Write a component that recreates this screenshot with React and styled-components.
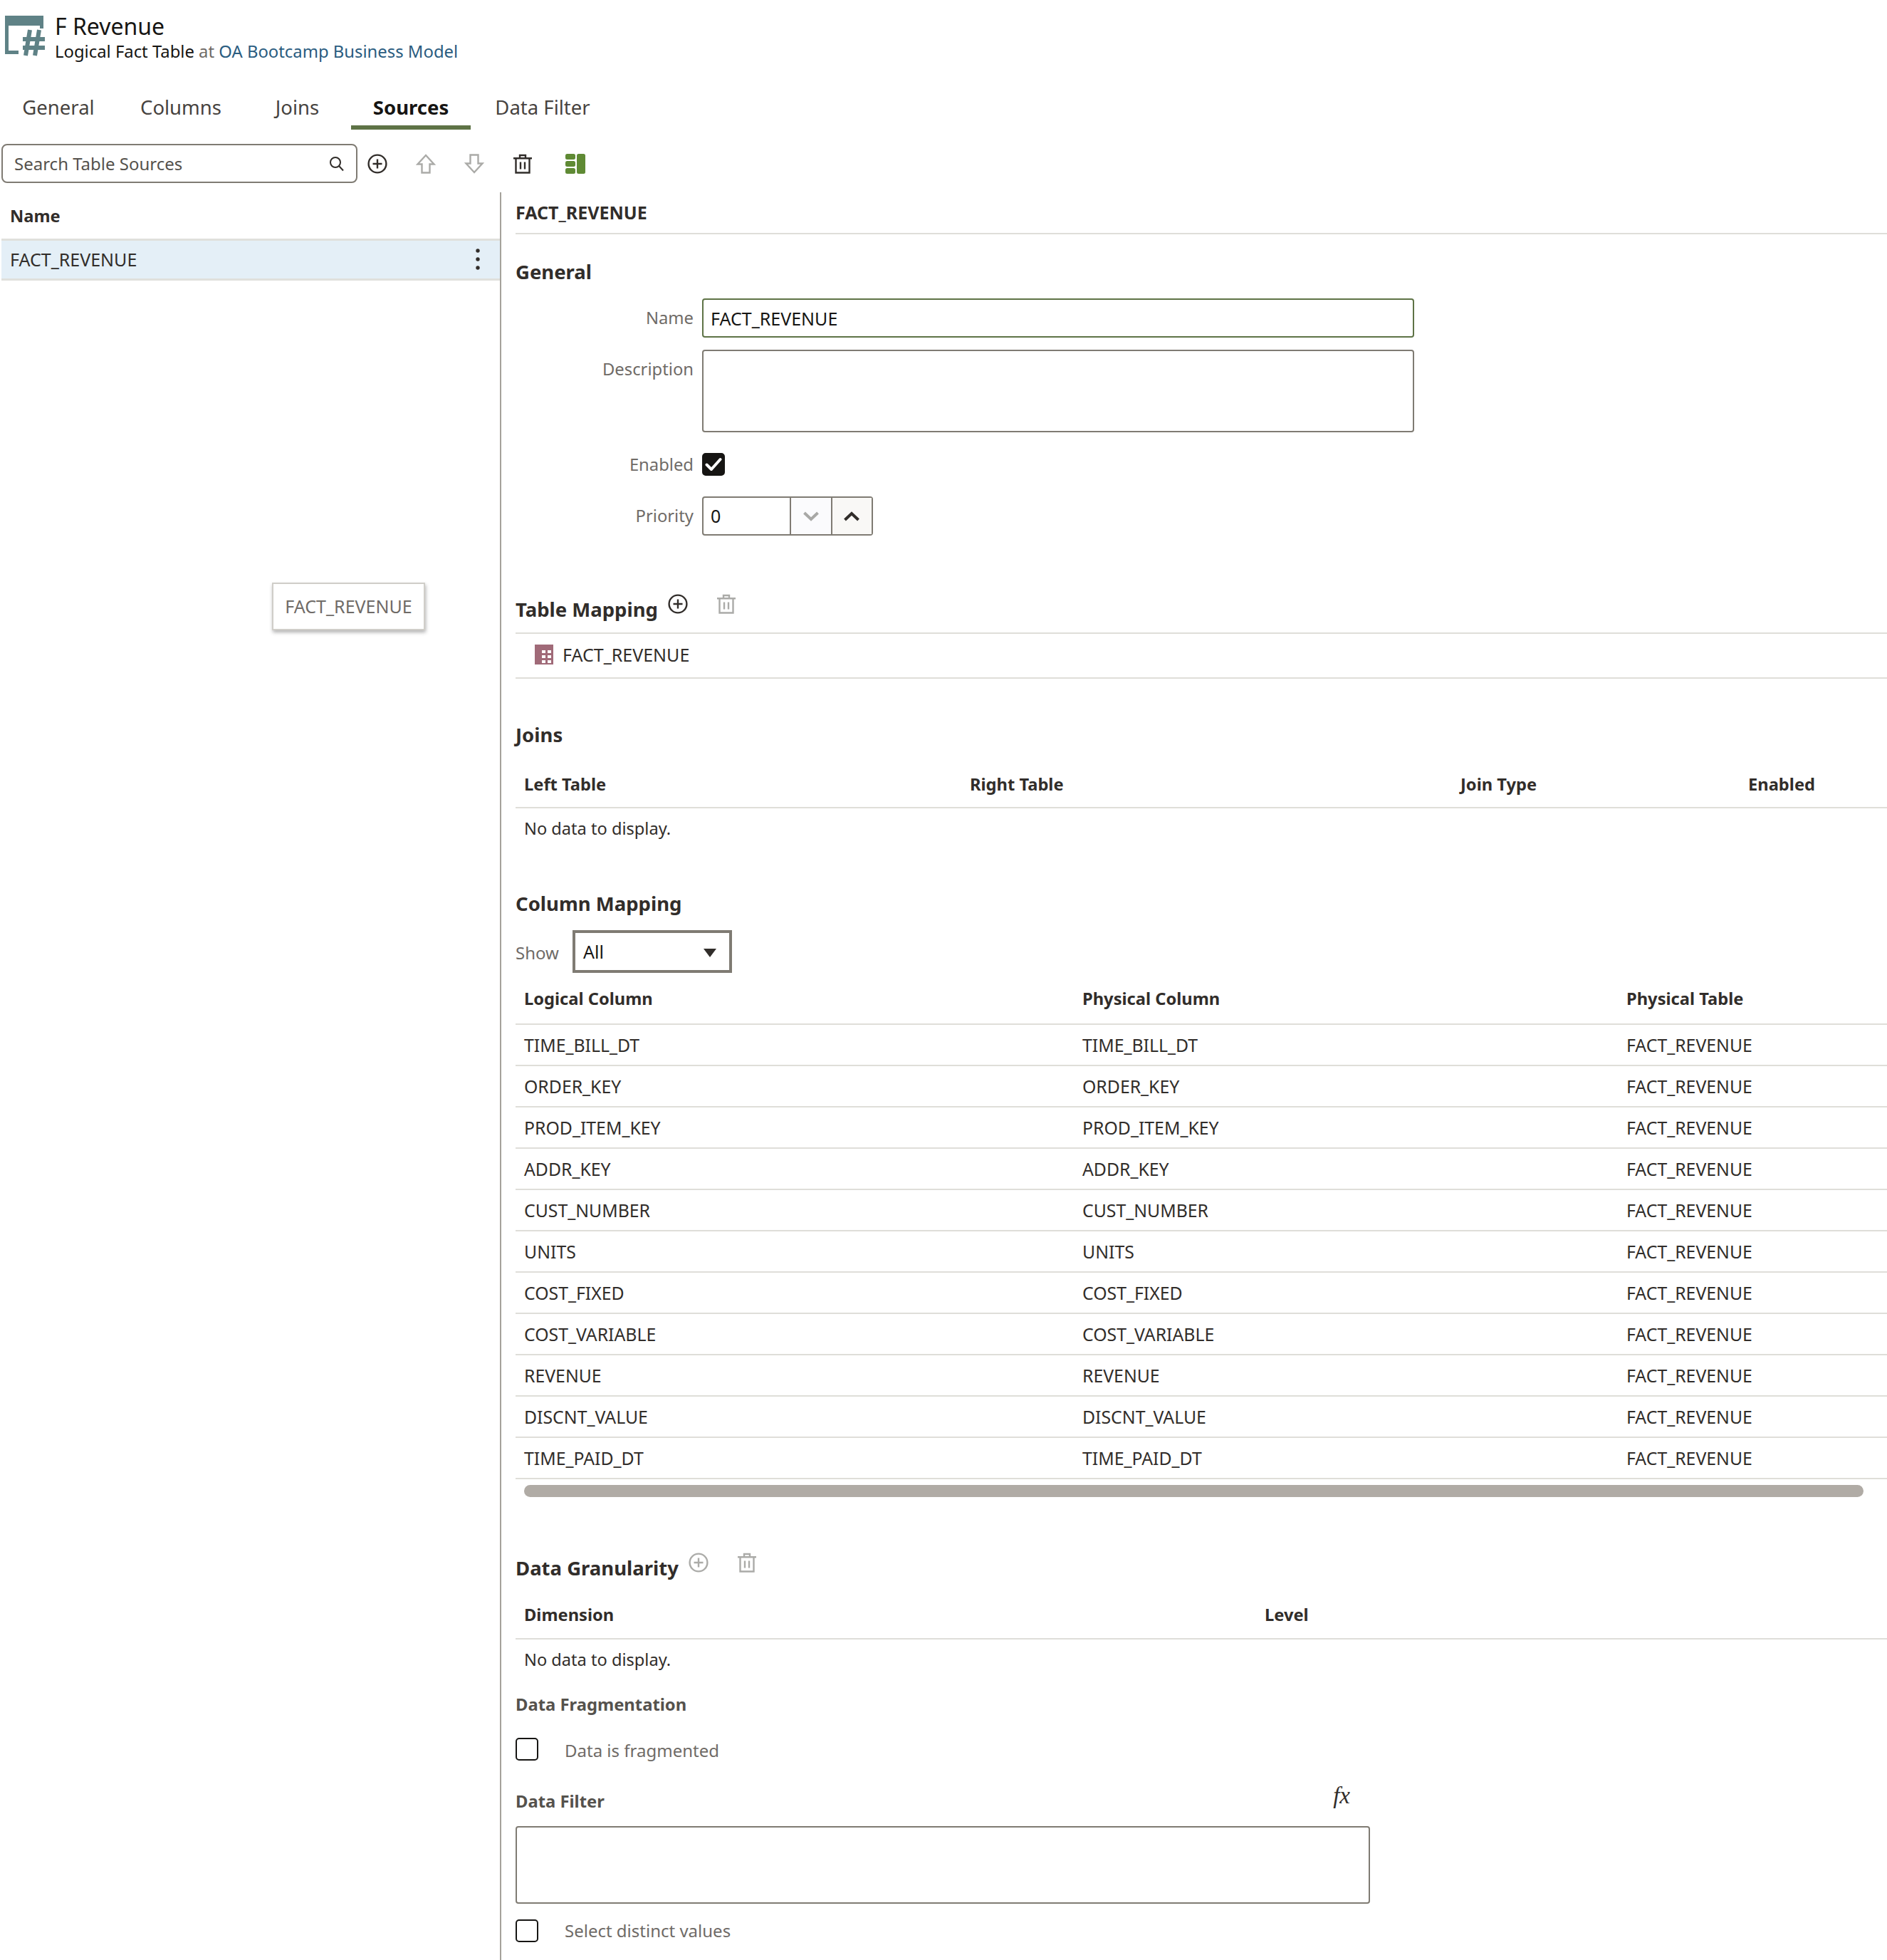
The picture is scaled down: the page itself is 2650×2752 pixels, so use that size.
import React from "react";
import styled, { createGlobalStyle } from "styled-components";

const GlobalStyle = createGlobalStyle`
  html, body {
    margin: 0;
    padding: 0;
    background: #fff;
    font-family: "Noto Sans", "Open Sans", sans-serif;
    color: #161513;
  }
  * { box-sizing: border-box; }
`;

const Page = styled.div`
  width: 2650px;
  height: 2752px;
  overflow: hidden;
  background: #fff;
`;

const Header = styled.header`
  display: flex;
  height: 91px;
  padding: 19px 0 0 7px;
`;

const HeaderIcon = styled.svg`
  width: 57px;
  height: 60px;
  margin: 3px 13px 0 0;
  flex: none;
`;

const Title = styled.div`
  font-size: 32px;
  line-height: 36px;
`;

const Subtitle = styled.div`
  font-size: 23.85px;
  line-height: 34px;
  color: #6f6b67;
`;

const Strong = styled.span`
  color: #161513;
`;

const ModelLink = styled.span`
  color: #2a5c80;
`;

const TabBar = styled.nav`
  display: flex;
  height: 60px;
  margin-top: 31px;
  padding-left: 2px;
`;

const Tab = styled.div`
  width: ${p => p.$w}px;
  margin-left: ${p => p.$gap || 0}px;
  text-align: center;
  font-size: 27.5px;
  line-height: 58px;
  color: ${p => (p.$active ? "#161513" : "#47433f")};
  font-weight: ${p => (p.$active ? 700 : 400)};
  box-shadow: ${p => (p.$active ? "inset 0 -6px 0 #5e7346" : "none")};
`;

const Toolbar = styled.div`
  display: flex;
  align-items: center;
  height: 55px;
  margin-top: 20px;
  padding-left: 2px;
`;

const SearchBox = styled.div`
  display: flex;
  align-items: center;
  justify-content: space-between;
  width: 500px;
  height: 55px;
  padding: 0 16px;
  border: 2px solid #7f7b73;
  border-radius: 8px;
`;

const SearchInput = styled.input`
  flex: 1;
  min-width: 0;
  border: 0;
  outline: 0;
  padding: 0;
  font: 400 24px "Noto Sans", sans-serif;
  color: #47433f;
  &::placeholder { color: #55524d; opacity: 1; }
`;

const IconBox = styled.div`
  display: flex;
  align-items: center;
  justify-content: center;
  flex: none;
  width: 40px;
  height: 28px;
  margin-left: ${p => p.$gap}px;
  color: ${p => p.$color || "#312d2a"};
`;

const Main = styled.main`
  display: flex;
  margin-top: 13px;
  height: 2482px;
`;

const LeftPane = styled.aside`
  position: relative;
  flex: none;
  width: 704px;
  border-right: 2px solid #a5a29b;
`;

const ListHead = styled.div`
  height: 65px;
  padding-left: 14px;
  font-size: 23.7px;
  font-weight: 700;
  line-height: 66px;
  color: #312d2a;
`;

const ListRow = styled.div`
  display: flex;
  align-items: center;
  justify-content: space-between;
  height: 59px;
  margin-left: 2px;
  padding: 0 27px 2px 12px;
  background: #e4eff7;
  border-top: 3px solid #e0e0dc;
  border-bottom: 3px solid #e0e0dc;
  font-size: 25px;
  color: #312d2a;
`;

const Kebab = styled.svg`
  width: 8px;
  height: 32px;
`;

const DragTip = styled.div`
  position: absolute;
  top: 548px;
  left: 382px;
  width: 215px;
  height: 67px;
  border: 2px solid #d0cec9;
  background: #fff;
  box-shadow: 1px 3px 5px rgba(0, 0, 0, 0.3);
  font-size: 25px;
  line-height: 63px;
  text-align: center;
  color: #6f6b67;
`;

const RightPane = styled.section`
  flex: 1;
  min-width: 0;
  padding-left: 20px;
`;

const PaneTitle = styled.div`
  height: 59px;
  padding-top: 14px;
  border-bottom: 2px solid #dfded9;
  font-size: 25px;
  font-weight: 700;
  line-height: 28px;
  color: #312d2a;
`;

const Heading = styled.h2`
  margin: ${p => p.$top}px 0 0;
  font-size: 27.5px;
  font-weight: 700;
  line-height: 40px;
  color: #312d2a;
`;

const HeadRow = styled.div`
  display: flex;
  align-items: flex-start;
  margin-top: ${p => p.$top}px;
  ${IconBox} { margin-top: -2px; }
`;

const FormRow = styled.div`
  display: flex;
  margin-top: ${p => p.$top}px;
`;

const FormLabel = styled.label`
  flex: none;
  width: 250px;
  margin-right: 12px;
  text-align: right;
  font-size: 23.8px;
  line-height: ${p => p.$lh}px;
  color: #6f6b67;
`;

const TextField = styled.input`
  width: 1000px;
  height: 55px;
  padding: 0 10px;
  border: 2px solid ${p => p.$accent || "#7f7b73"};
  border-radius: 4px;
  outline: 0;
  font: 400 25px "Noto Sans", sans-serif;
  color: #161513;
`;

const TextArea = styled.textarea`
  display: block;
  width: ${p => p.$w}px;
  height: ${p => p.$h}px;
  margin-top: ${p => p.$top || 0}px;
  border: 2px solid #7f7b73;
  border-radius: 4px;
  outline: 0;
  resize: none;
`;

const CheckBox = styled.div`
  display: flex;
  align-items: center;
  justify-content: center;
  flex: none;
  width: 32px;
  height: 32px;
  border-radius: 5px;
  border: 2.5px solid #161513;
  background: ${p => (p.$checked ? "#161513" : "#fff")};
`;

const Stepper = styled.div`
  display: flex;
  width: 240px;
  height: 55px;
  border: 2px solid #7f7b73;
  border-radius: 4px;
`;

const StepValue = styled.div`
  width: 121px;
  padding-left: 10px;
  font-size: 25px;
  line-height: 51px;
`;

const StepButton = styled.div`
  display: flex;
  align-items: center;
  justify-content: center;
  flex: 1;
  border-left: 2px solid #7f7b73;
  background: ${p => p.$bg};
  color: ${p => p.$color};
`;

const MappingRow = styled.div`
  display: flex;
  align-items: center;
  height: 65px;
  margin-top: 12px;
  padding: 0 0 4px 27px;
  border-top: 2px solid #dfded9;
  border-bottom: 2px solid #dfded9;
  font-size: 25px;
  color: #312d2a;
`;

const TableGlyph = styled.svg`
  width: 26px;
  height: 28px;
  margin-right: 13px;
`;

const GridRow = styled.div`
  display: grid;
  grid-template-columns: ${p => p.$cols};
  align-items: center;
  height: ${p => p.$h}px;
  margin-top: ${p => p.$top || 0}px;
  padding-left: 12px;
  border-bottom: 2px solid #dfded9;
`;

const HeadCell = styled.div`
  font-size: 23.7px;
  font-weight: 700;
  color: #312d2a;
`;

const BodyRow = styled(GridRow)`
  font-size: 24.8px;
  color: #312d2a;
`;

const EmptyRow = styled.div`
  padding-left: 12px;
  font-size: 23.6px;
  line-height: 56px;
  color: #312d2a;
`;

const ShowRow = styled.div`
  display: flex;
  align-items: center;
  margin-top: 17px;
`;

const ShowLabel = styled.span`
  width: 80px;
  padding-top: 2px;
  font-size: 24px;
  color: #6f6b67;
`;

const SelectBox = styled.div`
  display: flex;
  align-items: center;
  justify-content: space-between;
  width: 224px;
  height: 60px;
  padding: 0 18px 0 11px;
  border: 4px solid #7f7b73;
  font-size: 25px;
`;

const Caret = styled.svg`
  width: 18px;
  height: 12px;
  margin-top: 4px;
`;

const ScrollThumb = styled.div`
  width: 1881px;
  height: 17px;
  margin: 8px 0 0 12px;
  border-radius: 9px;
  background: #b0aba5;
`;

const SubHeading = styled.div`
  margin-top: ${p => p.$top}px;
  font-size: 23.8px;
  font-weight: 700;
  line-height: 30px;
  color: #55524d;
`;

const CheckRow = styled.div`
  display: flex;
  align-items: center;
  margin-top: ${p => p.$top}px;
`;

const CheckLabel = styled.span`
  margin-left: 37px;
  padding-top: ${p => p.$pad}px;
  font-size: 24px;
  color: #6f6b67;
`;

const FilterHead = styled.div`
  display: flex;
  justify-content: space-between;
  width: 1172px;
  margin-top: 40px;
`;

const FxMark = styled.span`
  margin-top: -8px;
  font: italic 400 33px "Liberation Serif", serif;
  line-height: 30px;
  color: #312d2a;
`;

const PlusIcon = () => (
  <svg width="28" height="28" viewBox="0 0 28 28" fill="none" stroke="currentColor" strokeWidth="2.4">
    <circle cx="14" cy="14" r="12.4" />
    <path d="M14 7.5v13M7.5 14h13" />
  </svg>
);

const TrashIcon = () => (
  <svg width="28" height="28" viewBox="0 0 28 28" fill="none" stroke="currentColor" strokeWidth="2.4">
    <path d="M1 6.2h26M10 6V2h8v4M4.5 6.2V26.5h19V6.2M11 11.5v10M17 11.5v10" />
  </svg>
);

const UpArrow = () => (
  <svg width="28" height="28" viewBox="0 0 28 28" fill="none" stroke="currentColor" strokeWidth="2.4">
    <path d="M14 2L2.5 14.5H8.5V26.5H19.5V14.5H25.5Z" />
  </svg>
);

const DownArrow = () => (
  <svg width="28" height="28" viewBox="0 0 28 28" fill="none" stroke="currentColor" strokeWidth="2.4">
    <path d="M14 26L2.5 13.5H8.5V1.5H19.5V13.5H25.5Z" />
  </svg>
);

const SplitIcon = () => (
  <svg width="28" height="28" viewBox="0 0 28 28" fill="#5f8a34">
    <rect x="0" y="0" width="14" height="8" rx="2.5" />
    <rect x="0" y="10" width="14" height="8" rx="2.5" />
    <rect x="0" y="20" width="14" height="8" rx="2.5" />
    <rect x="16" y="0" width="12" height="28" rx="2.5" />
  </svg>
);

const Chevron = ({ up }) => (
  <svg width="22" height="14" viewBox="0 0 22 14" fill="none" stroke="currentColor" strokeWidth="4">
    <path d={up ? "M1.5 12L11 3l9.5 9" : "M1.5 2L11 11l9.5-9"} />
  </svg>
);

const CheckMark = () => (
  <svg width="24" height="20" viewBox="0 0 24 20" fill="none" stroke="#fff" strokeWidth="4" strokeLinecap="round" strokeLinejoin="round">
    <path d="M2.5 10.5L9 17 21.5 3" />
  </svg>
);

const rows = [
  "TIME_BILL_DT",
  "ORDER_KEY",
  "PROD_ITEM_KEY",
  "ADDR_KEY",
  "CUST_NUMBER",
  "UNITS",
  "COST_FIXED",
  "COST_VARIABLE",
  "REVENUE",
  "DISCNT_VALUE",
  "TIME_PAID_DT",
];

const MAP_COLS = "784px 764px 1fr";

export default function App() {
  return (
    <Page>
      <GlobalStyle />
      <Header>
        <HeaderIcon viewBox="0 0 57 60">
          <path fill="#5f8286" d="M0 0h54v18h-5V14H5v35h14v5H0z" />
          <path
            stroke="#5f8286"
            strokeWidth="6"
            fill="none"
            d="M35 20L29 56M48 20L42 56M25 33H56M25 45H56"
          />
        </HeaderIcon>
        <div>
          <Title>F Revenue</Title>
          <Subtitle>
            <Strong>Logical Fact Table</Strong> at <ModelLink>OA Bootcamp Business Model</ModelLink>
          </Subtitle>
        </div>
      </Header>

      <TabBar>
        <Tab $w={160}>General</Tab>
        <Tab $w={184}>Columns</Tab>
        <Tab $w={143}>Joins</Tab>
        <Tab $w={168} $gap={4} $active>Sources</Tab>
        <Tab $w={202}>Data Filter</Tab>
      </TabBar>

      <Toolbar>
        <SearchBox>
          <SearchInput placeholder="Search Table Sources" readOnly />
          <svg width="22" height="22" viewBox="0 0 22 22" fill="none" stroke="#312d2a" strokeWidth="2">
            <circle cx="9" cy="9" r="7" />
            <path d="M14 14l6 6.5" />
          </svg>
        </SearchBox>
        <IconBox $gap={8}><PlusIcon /></IconBox>
        <IconBox $gap={28} $color="#ababa8"><UpArrow /></IconBox>
        <IconBox $gap={28} $color="#ababa8"><DownArrow /></IconBox>
        <IconBox $gap={28}><TrashIcon /></IconBox>
        <IconBox $gap={34}><SplitIcon /></IconBox>
      </Toolbar>

      <Main>
        <LeftPane>
          <ListHead>Name</ListHead>
          <ListRow>
            FACT_REVENUE
            <Kebab viewBox="0 0 8 32" fill="#312d2a">
              <circle cx="4" cy="4" r="2.7" />
              <circle cx="4" cy="16" r="2.7" />
              <circle cx="4" cy="28" r="2.7" />
            </Kebab>
          </ListRow>
          <DragTip>FACT_REVENUE</DragTip>
        </LeftPane>

        <RightPane>
          <PaneTitle>FACT_REVENUE</PaneTitle>
          <Heading $top={33}>General</Heading>

          <FormRow $top={17}>
            <FormLabel $lh={55}>Name</FormLabel>
            <TextField $accent="#5e7346" defaultValue="FACT_REVENUE" readOnly />
          </FormRow>
          <FormRow $top={17}>
            <FormLabel $lh={55}>Description</FormLabel>
            <TextArea $w={1000} $h={116} readOnly />
          </FormRow>
          <FormRow $top={29}>
            <FormLabel $lh={32}>Enabled</FormLabel>
            <CheckBox $checked><CheckMark /></CheckBox>
          </FormRow>
          <FormRow $top={29}>
            <FormLabel $lh={55}>Priority</FormLabel>
            <Stepper>
              <StepValue>0</StepValue>
              <StepButton $bg="#fbfbfd" $color="#a8a8a6"><Chevron /></StepButton>
              <StepButton $bg="#f9f8f6" $color="#312d2a"><Chevron up /></StepButton>
            </Stepper>
          </FormRow>

          <HeadRow $top={84}>
            <Heading $top={0}>Table Mapping</Heading>
            <IconBox $gap={8}><PlusIcon /></IconBox>
            <IconBox $gap={28} $color="#ababa8"><TrashIcon /></IconBox>
          </HeadRow>
          <MappingRow>
            <TableGlyph viewBox="0 0 26 28">
              <rect width="26" height="28" fill="#a06a78" />
              <g fill="#fff">
                <rect x="10" y="8" width="5" height="4" />
                <rect x="18" y="8" width="5" height="4" />
                <rect x="10" y="15" width="5" height="4" />
                <rect x="18" y="15" width="5" height="4" />
                <rect x="10" y="22" width="5" height="4" />
                <rect x="18" y="22" width="5" height="4" />
              </g>
            </TableGlyph>
            FACT_REVENUE
          </MappingRow>

          <Heading $top={59}>Joins</Heading>
          <GridRow $cols="626px 689px 404px 1fr" $h={66} $top={17}>
            <HeadCell>Left Table</HeadCell>
            <HeadCell>Right Table</HeadCell>
            <HeadCell>Join Type</HeadCell>
            <HeadCell>Enabled</HeadCell>
          </GridRow>
          <EmptyRow>No data to display.</EmptyRow>

          <Heading $top={58}>Column Mapping</Heading>
          <ShowRow>
            <ShowLabel>Show</ShowLabel>
            <SelectBox>
              All
              <Caret viewBox="0 0 18 12" fill="#312d2a">
                <path d="M0 0h18L9 12z" />
              </Caret>
            </SelectBox>
          </ShowRow>
          <GridRow $cols={MAP_COLS} $h={73}>
            <HeadCell>Logical Column</HeadCell>
            <HeadCell>Physical Column</HeadCell>
            <HeadCell>Physical Table</HeadCell>
          </GridRow>
          {rows.map(name => (
            <BodyRow key={name} $cols={MAP_COLS} $h={58}>
              <div>{name}</div>
              <div>{name}</div>
              <div>FACT_REVENUE</div>
            </BodyRow>
          ))}
          <ScrollThumb />

          <HeadRow $top={80}>
            <Heading $top={0}>Data Granularity</Heading>
            <IconBox $gap={8} $color="#ababa8"><PlusIcon /></IconBox>
            <IconBox $gap={28} $color="#ababa8"><TrashIcon /></IconBox>
          </HeadRow>
          <GridRow $cols="1040px 1fr" $h={68} $top={12}>
            <HeadCell>Dimension</HeadCell>
            <HeadCell>Level</HeadCell>
          </GridRow>
          <EmptyRow>No data to display.</EmptyRow>

          <SubHeading $top={20}>Data Fragmentation</SubHeading>
          <CheckRow $top={29}>
            <CheckBox />
            <CheckLabel $pad={4}>Data is fragmented</CheckLabel>
          </CheckRow>
          <FilterHead>
            <SubHeading $top={0}>Data Filter</SubHeading>
            <FxMark>fx</FxMark>
          </FilterHead>
          <TextArea $w={1200} $h={109} $top={20} readOnly />
          <CheckRow $top={21}>
            <CheckBox />
            <CheckLabel $pad={0}>Select distinct values</CheckLabel>
          </CheckRow>
        </RightPane>
      </Main>
    </Page>
  );
}
